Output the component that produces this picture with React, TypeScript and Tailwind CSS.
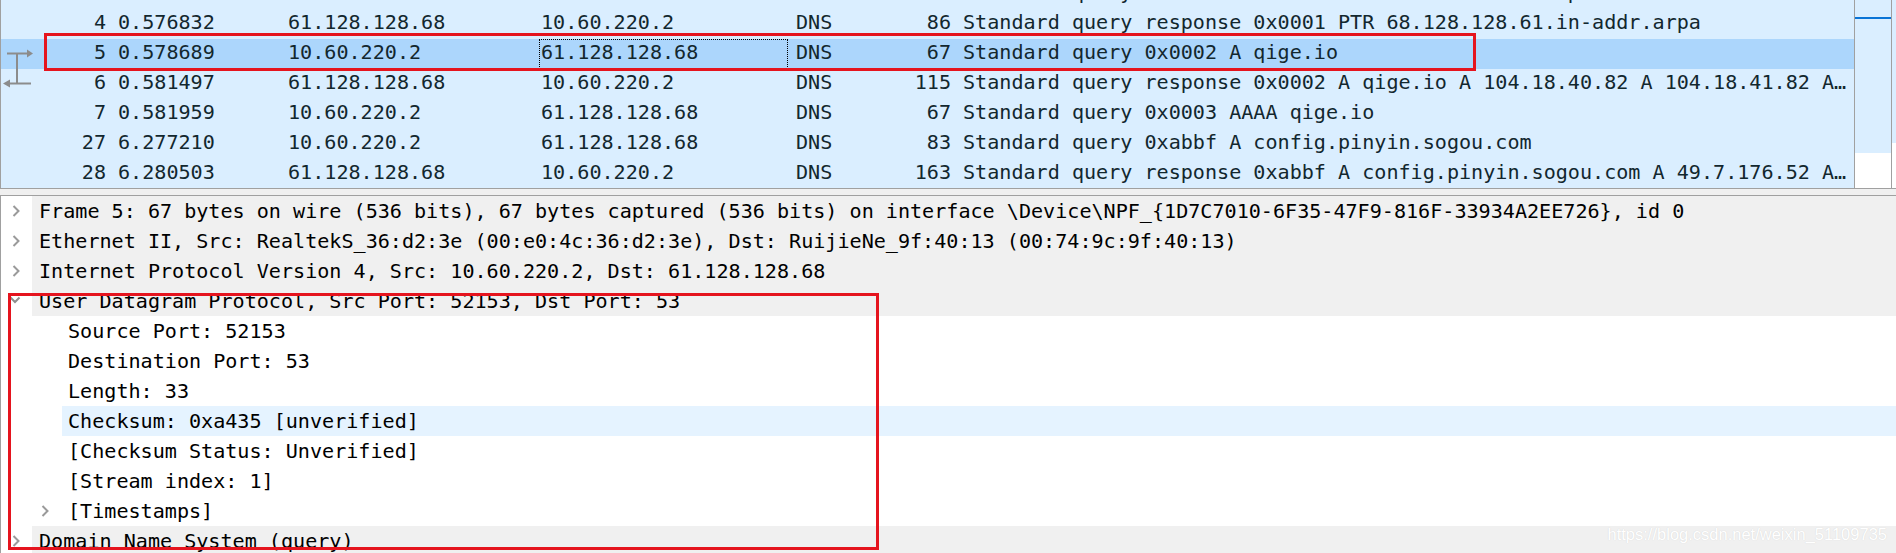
import React from 'react';

interface Packet {
  no: string;
  time: string;
  src: string;
  dst: string;
  proto: string;
  len: string;
  info: string;
  selected?: boolean;
}

const packets: Packet[] = [
  { no: '3', time: '0.557283', src: '10.60.220.2', dst: '61.128.128.68', proto: 'DNS', len: '86', info: 'Standard query 0x0001 PTR 68.128.128.61.in-addr.arpa' },
  { no: '4', time: '0.576832', src: '61.128.128.68', dst: '10.60.220.2', proto: 'DNS', len: '86', info: 'Standard query response 0x0001 PTR 68.128.128.61.in-addr.arpa' },
  { no: '5', time: '0.578689', src: '10.60.220.2', dst: '61.128.128.68', proto: 'DNS', len: '67', info: 'Standard query 0x0002 A qige.io', selected: true },
  { no: '6', time: '0.581497', src: '61.128.128.68', dst: '10.60.220.2', proto: 'DNS', len: '115', info: 'Standard query response 0x0002 A qige.io A 104.18.40.82 A 104.18.41.82 A…' },
  { no: '7', time: '0.581959', src: '10.60.220.2', dst: '61.128.128.68', proto: 'DNS', len: '67', info: 'Standard query 0x0003 AAAA qige.io' },
  { no: '27', time: '6.277210', src: '10.60.220.2', dst: '61.128.128.68', proto: 'DNS', len: '83', info: 'Standard query 0xabbf A config.pinyin.sogou.com' },
  { no: '28', time: '6.280503', src: '61.128.128.68', dst: '10.60.220.2', proto: 'DNS', len: '163', info: 'Standard query response 0xabbf A config.pinyin.sogou.com A 49.7.176.52 A…' },
];

// 详情树的行
interface TreeRow {
  text: string;
  level: 0 | 1;
  arrow?: 'closed' | 'open';
  hover?: boolean;
}

const treeRows: TreeRow[] = [
  { text: 'Frame 5: 67 bytes on wire (536 bits), 67 bytes captured (536 bits) on interface \\Device\\NPF_{1D7C7010-6F35-47F9-816F-33934A2EE726}, id 0', level: 0, arrow: 'closed' },
  { text: 'Ethernet II, Src: RealtekS_36:d2:3e (00:e0:4c:36:d2:3e), Dst: RuijieNe_9f:40:13 (00:74:9c:9f:40:13)', level: 0, arrow: 'closed' },
  { text: 'Internet Protocol Version 4, Src: 10.60.220.2, Dst: 61.128.128.68', level: 0, arrow: 'closed' },
  { text: 'User Datagram Protocol, Src Port: 52153, Dst Port: 53', level: 0, arrow: 'open' },
  { text: 'Source Port: 52153', level: 1 },
  { text: 'Destination Port: 53', level: 1 },
  { text: 'Length: 33', level: 1 },
  { text: 'Checksum: 0xa435 [unverified]', level: 1, hover: true },
  { text: '[Checksum Status: Unverified]', level: 1 },
  { text: '[Stream index: 1]', level: 1 },
  { text: '[Timestamps]', level: 1, arrow: 'closed' },
  { text: 'Domain Name System (query)', level: 0, arrow: 'closed' },
];

const Chevron: React.FC<{ open?: boolean }> = ({ open }) =>
  open ? (
    <svg width="12" height="8" viewBox="0 0 12 8" className="mt-[-2px]">
      <path d="M1.5 1.5 L6 6 L10.5 1.5" fill="none" stroke="#8e8e8e" strokeWidth="2" />
    </svg>
  ) : (
    <svg width="9" height="12" viewBox="0 0 9 12">
      <path d="M1.5 1 L6.5 6 L1.5 11" fill="none" stroke="#9a9a9a" strokeWidth="2" />
    </svg>
  );

const PacketRow: React.FC<{ p: Packet; first?: boolean }> = ({ p, first }) => (
  <div
    className={`flex h-[30px] shrink-0 items-start whitespace-nowrap leading-[26px] ${first ? '-mt-[21px]' : ''} ${
      p.selected ? 'bg-[#acd6fc]' : ''
    }`}
  >
    <div className="w-[35px] shrink-0" />
    <div className="w-[74px] shrink-0 pr-[4px] text-right">{p.no}</div>
    <div className="w-[174px] shrink-0 pl-[8px]">{p.time}</div>
    <div className="w-[255px] shrink-0 pl-[4px]">{p.src}</div>
    <div
      className={`h-[30px] w-[249px] shrink-0 border border-dotted pl-[1px] leading-[24px] ${
        p.selected ? 'border-black' : 'border-transparent'
      }`}
    >
      {p.dst}
    </div>
    <div className="w-[108px] shrink-0 pl-[8px]">{p.proto}</div>
    <div className="w-[59px] shrink-0 pr-[4px] text-right">{p.len}</div>
    <div className="min-w-0 flex-1 overflow-hidden pl-[8px]">{p.info}</div>
  </div>
);

export default function App() {
  return (
    <div className="relative h-[553px] w-[1896px] overflow-hidden bg-white font-['DejaVu_Sans_Mono',monospace] text-[20.1px] leading-[30px]">
      {/* 数据包列表 */}
      <div className="flex h-[189px] border-b border-[#a0a0a0] bg-[#f0f0f0]">
        <div className="relative flex min-w-0 flex-1 flex-col overflow-hidden border-l border-[#a0a0a0] bg-[#daeeff] text-[#12272e]">
          {packets.map((p, i) => (
            <PacketRow key={p.no} p={p} first={i === 0} />
          ))}
          {/* 请求/响应关联标记 */}
          <svg width="34" height="48" viewBox="0 0 34 48" className="absolute left-0 top-[44px]">
            <g stroke="#8c8c8c" strokeWidth="2" fill="none">
              <path d="M6 9.5 H27" />
              <path d="M16 9.5 V39.5" />
              <path d="M9 39.5 H30" />
            </g>
            <path d="M26 5.5 L32 9.5 L26 13.5 Z" fill="#8c8c8c" />
            <path d="M9 35.5 L2 39.5 L9 43.5 Z" fill="#8c8c8c" />
          </svg>
        </div>
        {/* 滚动条小地图 */}
        <div className="flex w-[38px] shrink-0 flex-col border-x border-[#a0a0a0]">
          <div className="h-[17px] bg-[#daeeff]" />
          <div className="h-[2px] bg-[#0a74d6]" />
          <div className="h-[134px] bg-[#daeeff]" />
          <div className="flex-1 bg-white" />
        </div>
        <div className="flex w-[4px] shrink-0 flex-col">
          <div className="h-[143px] bg-[#daeeff]" />
          <div className="flex-1 bg-white" />
        </div>
      </div>

      <div className="h-[6px] bg-[#f0f0f0]" />

      {/* 协议详情树 */}
      <div className="border-l border-t border-[#a0a0a0] text-black">
        {treeRows.map((r, i) => (
          <div key={i} className="flex h-[30px] whitespace-nowrap">
            <div
              className={`flex shrink-0 items-center justify-end ${r.level === 0 ? 'w-[31px] pr-[11px]' : 'w-[61px] pr-[12px]'}`}
            >
              {r.arrow && <Chevron open={r.arrow === 'open'} />}
            </div>
            <div
              className={`flex-1 ${r.level === 0 ? 'bg-[#f0f0f0] pl-[7px]' : 'pl-[6px]'} ${
                r.hover ? 'bg-[#e5f3ff]' : ''
              }`}
            >
              {r.text}
            </div>
          </div>
        ))}
      </div>

      {/* 标注框 */}
      <div className="absolute left-[44px] top-[33px] h-[38px] w-[1432px] border-[3px] border-[#e5141e]" />
      <div className="absolute left-[8px] top-[293px] h-[257px] w-[871px] border-[3px] border-[#e5141e]" />

      {/* 水印 */}
      <div className="absolute bottom-[9px] right-[9px] font-['Liberation_Sans',sans-serif] text-[16.5px] leading-[20px] text-white [text-shadow:0_0_1px_#cfcfcf]">
        https://blog.csdn.net/weixin_51109735
      </div>
    </div>
  );
}
